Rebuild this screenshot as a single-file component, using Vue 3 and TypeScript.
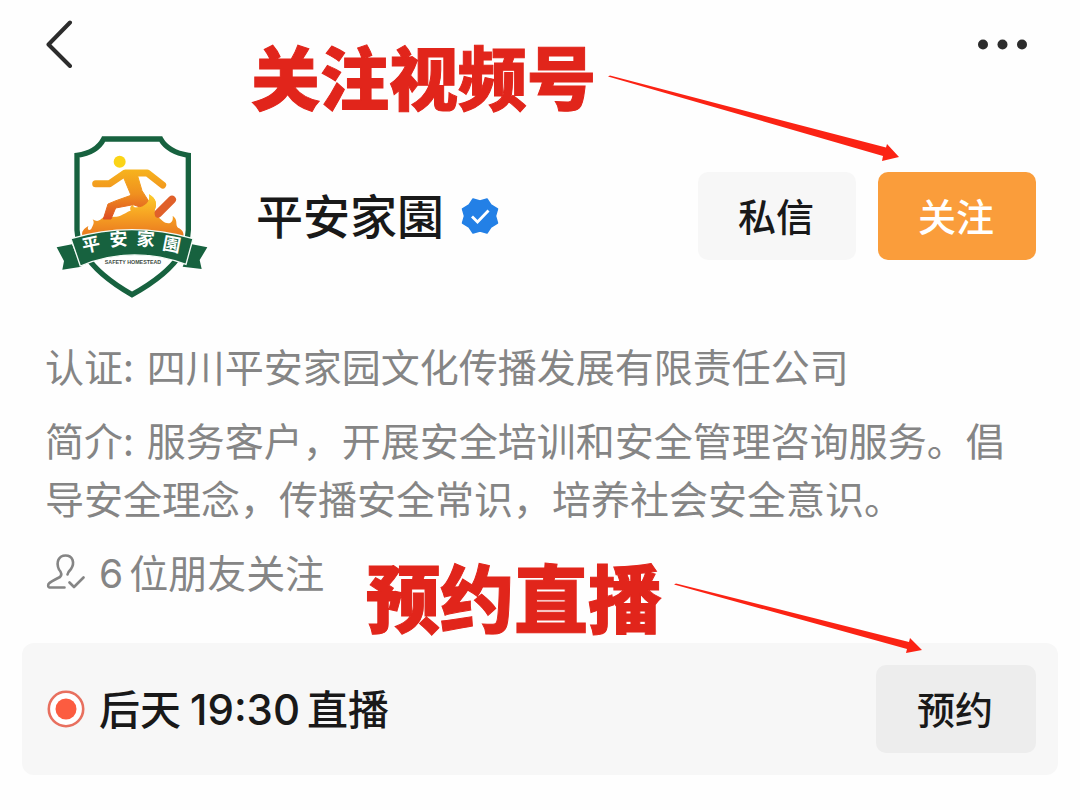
<script setup lang="ts">
interface Detail {
  label: string
  text: string
}

const details: Detail[] = [
  { label: '认证:', text: '四川平安家园文化传播发展有限责任公司' },
  { label: '简介:', text: '服务客户，开展安全培训和安全管理咨询服务。倡导安全理念，传播安全常识，培养社会安全意识。' },
]
</script>

<template>
  <main class="page">
    <header class="topbar">
      <button class="icon-button" type="button" aria-label="返回">
        <svg width="28" height="48" viewBox="0 0 28 48">
          <path d="M25 2.500L3.500 24.500L25 46" fill="none" stroke="#2c2c2c" stroke-width="4" stroke-linecap="round" stroke-linejoin="round" />
        </svg>
      </button>
      <button class="icon-button" type="button" aria-label="更多">
        <svg width="50" height="12" viewBox="0 0 50 12" fill="#2c2c2c">
          <circle cx="5" cy="6.500" r="5" />
          <circle cx="24.500" cy="6.500" r="5" />
          <circle cx="44" cy="6.500" r="5" />
        </svg>
      </button>
    </header>

    <section class="profile">
      <svg class="logo" viewBox="48 36 456 504" role="img" aria-label="平安家園">
        <defs>
          <linearGradient id="flame" gradientUnits="userSpaceOnUse" x1="0" y1="225" x2="0" y2="345">
            <stop offset="0" stop-color="#fccb2c" />
            <stop offset="0.450" stop-color="#f7a623" />
            <stop offset="1" stop-color="#ea7a20" />
          </linearGradient>
          <linearGradient id="runner" gradientUnits="userSpaceOnUse" x1="0" y1="145" x2="0" y2="300">
            <stop offset="0" stop-color="#f7b51d" />
            <stop offset="0.500" stop-color="#f0901f" />
            <stop offset="1" stop-color="#dc4a22" />
          </linearGradient>
        </defs>
        <path d="M191 57H362Q384 96 445 106V330Q442 432 276 524Q116 432 111 330V106Q170 98 191 57Z" fill="#fff" stroke="#17623f" stroke-width="16" />
        <path d="M127 346C124 334 132 326 145 318C140 331 149 333 154 326C160 314 164 308 158 298C174 308 180 300 190 292L230 290C250 286 258 276 272 272C268 262 273 256 281 254C278 262 286 266 298 260C320 254 332 244 327 223C350 236 352 255 344 270C342 285 358 292 368 303C382 315 402 312 398 287C416 300 404 314 414 323C428 328 432 340 430 348Z" fill="url(#flame)" />
        <path d="M248 166L273 226L228 242L204 252L190 297H213L227 264L280 254L302 262L330 250L306 212L293 168L280 156Z" fill="url(#runner)" stroke="url(#runner)" stroke-width="3" stroke-linejoin="round" />
        <path d="M167 191H209L256 159H322L368 195" stroke="url(#runner)" stroke-width="21" fill="none" stroke-linecap="round" stroke-linejoin="round" />
        <path d="M396 239L354 281" stroke="#e0602a" stroke-width="24" stroke-linecap="round" />
        <path d="M281 262C310 267 333 246 327 223C350 236 352 255 344 270Q342 287 350 300L276 295Z" fill="url(#flame)" />
        <circle cx="239" cy="125" r="18" fill="#fbd417" />
        <path d="M50 382L96 373L124 440L67 449L72 423Z" fill="#17623f" />
        <path d="M502 382L456 373L428 440L485 447L479 420Z" fill="#17623f" />
        <path d="M93 356Q275 302 459 356L438 433Q275 374 121 438Z" fill="#17623f" stroke="#f4fbf6" stroke-width="4" />
        <g class="ribbon-text" text-anchor="middle">
          <text transform="translate(157 393) rotate(-12)">平</text>
          <text transform="translate(237 377) rotate(-4)">安</text>
          <text transform="translate(316 377) rotate(4)">家</text>
          <text transform="translate(392 392) rotate(11)">園</text>
        </g>
        <text class="motto" x="279" y="431" text-anchor="middle">SAFETY HOMESTEAD</text>
      </svg>

      <h1 class="name">平安家園</h1>
      <svg class="badge" width="38" height="38" viewBox="0 0 38 38" role="img" aria-label="已认证">
        <path d="M19 4L26 2L30 8L36.500 12L34.500 19L36.500 26L30 30L26 36L19 34L12 36L8 30L1.500 26L3.500 19L1.500 12L8 8L12 2Z" fill="#2380e6" stroke="#2380e6" stroke-width="1.500" stroke-linejoin="round" />
        <path d="M11 19.500L16.500 25L27.500 13.500" fill="none" stroke="#fff" stroke-width="2.800" />
      </svg>

      <div class="actions">
        <button class="button" type="button">私信</button>
        <button class="button primary" type="button">关注</button>
      </div>
    </section>

    <section class="details">
      <p v-for="item in details" :key="item.label">{{ item.label }}&#x2004;{{ item.text }}</p>
      <p class="friends">
        <svg width="40" height="38" viewBox="0 0 40 38" fill="none" stroke="#858585" stroke-width="2.600" stroke-linecap="round" stroke-linejoin="round">
          <path d="M19.500 35.500H4.500Q2.500 35 3.500 32Q5 30 15 25Q18 22 14 17.500C10.500 10 14 3.500 20.500 3.500C28 3.500 30 11 26 17Q23 20 22.500 22.500" />
          <path d="M24.500 30.500L29 35L38.500 25.500" />
        </svg>
        <span class="count"><span class="number">6</span>位朋友关注</span>
      </p>
    </section>

    <section class="live">
      <svg width="38" height="38" viewBox="0 0 38 38" aria-hidden="true">
        <circle cx="19" cy="19" r="17.200" fill="#fff" stroke="#e8705f" stroke-width="2.600" />
        <circle cx="19" cy="19" r="10.500" fill="#fc5c40" />
      </svg>
      <span class="live-title">后天<span class="number">19:30</span>直播</span>
      <button class="button reserve" type="button">预约</button>
    </section>

    <div class="callout follow-callout">
      <span>关注视频号</span>
      <svg width="292" height="88" viewBox="0 0 292 88">
        <path d="M1 1.500L3 .5L279 72.500L280 69L292 82L275 86L276 81Z" fill="#fb2314" />
      </svg>
    </div>
    <div class="callout reserve-callout">
      <span>预约直播</span>
      <svg width="250" height="72" viewBox="0 0 250 72">
        <path d="M1 1.500L3 .5L236 59L237 55L249 67L233 70L234 66Z" fill="#fb2314" />
      </svg>
    </div>
  </main>
</template>

<style>
body {
  margin: 0;
  background: #fefefe;
}
</style>

<style scoped>
.page {
  position: relative;
  box-sizing: border-box;
  padding-bottom: 34px;
  overflow: hidden;
  color: #191919;
  font-family: "Noto Sans CJK SC", sans-serif;
}

.topbar {
  display: flex;
  align-items: center;
  justify-content: space-between;
  height: 88px;
  padding: 0 52px 0 45px;
}

.icon-button {
  display: flex;
  padding: 0;
  border: 0;
  background: none;
}

.profile {
  display: flex;
  align-items: center;
  margin-top: 44px;
  padding: 0 44px 0 56px;
}

.logo {
  width: 152px;
  height: 168px;
}

.ribbon-text {
  fill: #fff;
  font-size: 54px;
  font-weight: 700;
}

.motto {
  fill: #3d4b43;
  font-family: "Liberation Sans", sans-serif;
  font-size: 16px;
  font-weight: 700;
}

.name {
  margin: 0 17px 0 48px;
  padding-bottom: 4px;
  font-size: 47px;
  font-weight: 500;
  line-height: 64px;
}

.actions {
  display: flex;
  gap: 22px;
  margin-left: auto;
}

.button {
  width: 158px;
  height: 88px;
  padding: 0 2px 4px 0;
  border: 0;
  border-radius: 10px;
  background: #f7f7f7;
  color: #191919;
  font: 500 38px "Noto Sans CJK SC", sans-serif;
}

.primary {
  background: #fa9d3b;
  color: #fff;
}

.details {
  padding: 36px 45px 0;
  color: #858585;
  font-size: 39px;
  line-height: 58px;
}

.details p {
  margin: 0 0 16px;
}

.details .friends {
  display: flex;
  align-items: center;
  gap: 14px;
  margin: 0;
}

.number {
  font-family: Inter, sans-serif;
  line-height: 1;
}

.count .number {
  margin-right: 6px;
}

.live {
  display: flex;
  align-items: center;
  gap: 14px;
  margin: 43px 22px 0;
  padding: 22px 22px 22px 25px;
  border-radius: 12px;
  background: #f7f7f7;
}

.live-title {
  padding-bottom: 4px;
  font-size: 41px;
  font-weight: 500;
  line-height: 58px;
}

.live-title .number {
  margin: 0 7px 0 9px;
  font-size: 42px;
}

.reserve {
  width: 160px;
  margin-left: auto;
  background: #ededed;
}

.callout {
  position: absolute;
  display: flex;
  gap: 11px;
  color: #e1251b;
  font-weight: 900;
  line-height: 80px;
  white-space: nowrap;
  pointer-events: none;
  -webkit-text-stroke: 1px #e1251b;
}

.callout svg {
  margin-top: 40px;
}

.follow-callout {
  top: 35px;
  left: 251px;
  font-size: 69px;
}

.reserve-callout {
  top: 555px;
  left: 366px;
  font-size: 74px;
}

.reserve-callout svg {
  margin-top: 28px;
}
</style>
